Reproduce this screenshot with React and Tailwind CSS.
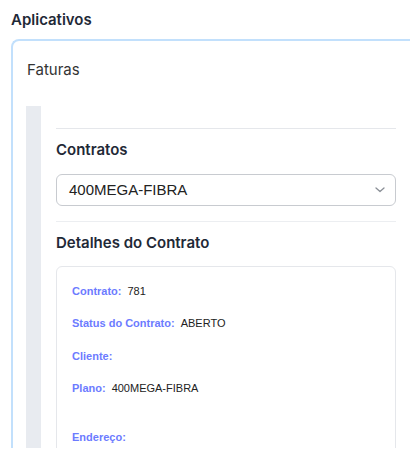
import React from 'react';

const rows = [
  { label: 'Contrato:', value: '781' },
  { label: 'Status do Contrato:', value: 'ABERTO' },
  { label: 'Cliente:', value: '' },
  { label: 'Plano:', value: '400MEGA-FIBRA', extra: true },
  { label: 'Endereço:', value: '' },
];

const App = () => {
  return (
    <div className="w-[410px] h-[448px] overflow-hidden bg-white font-['Inter',sans-serif] text-[#1f2937]">
      <h2 className="pl-[11px] pt-[10px] text-[15px] leading-[20px] font-semibold">Aplicativos</h2>

      <div className="ml-[11px] mt-[9px] w-[420px] border-l-2 border-t-2 border-[#c2e0fc] rounded-tl-lg pt-[19px] pl-[13px]">
        <p className="pl-[1px] text-[15px] leading-[20px] text-[#333]">Faturas</p>

        <div className="mt-[26px] border-l-[15px] border-[#e8ebf0] pl-[15px] pt-[22px]">
          <div className="w-[340px]">
            <div className="border-t border-[#e5e7eb]" />

            <h3 className="mt-[11px] text-[15px] leading-[20px] font-semibold">Contratos</h3>

            <div className="mt-[14px] h-[32px] flex items-center justify-between rounded-md border border-[#c8cbd0] pl-[12px] pr-[10px]">
              <span className="font-['Liberation_Sans',Arial,sans-serif] text-[15px] text-[#222]">400MEGA-FIBRA</span>
              <svg width="10" height="6" viewBox="0 0 10 6" fill="none">
                <path d="M1 1l4 3.5L9 1" stroke="#8a8f96" strokeWidth="1.3" strokeLinecap="round" strokeLinejoin="round" />
              </svg>
            </div>

            <div className="mt-[15px] border-t border-[#eceef1]" />

            <h3 className="mt-[11px] text-[15px] leading-[20px] font-semibold">Detalhes do Contrato</h3>

            <div className="mt-[13px] h-[300px] rounded-md border border-[#e5e7eb] pt-[16px] pl-[15px] font-['Liberation_Sans',Arial,sans-serif]">
              {rows.map(row => (
                <div
                  key={row.label}
                  className={`flex items-center h-[16px] text-[11px] ${row.extra ? 'mb-[33px]' : 'mb-[16.5px]'}`}
                >
                  <span className="font-bold text-[#6c7bff]">{row.label}</span>
                  {row.value && <span className="ml-[6px] text-[#222]">{row.value}</span>}
                </div>
              ))}
            </div>
          </div>
        </div>
      </div>
    </div>
  );
};

export default App;
